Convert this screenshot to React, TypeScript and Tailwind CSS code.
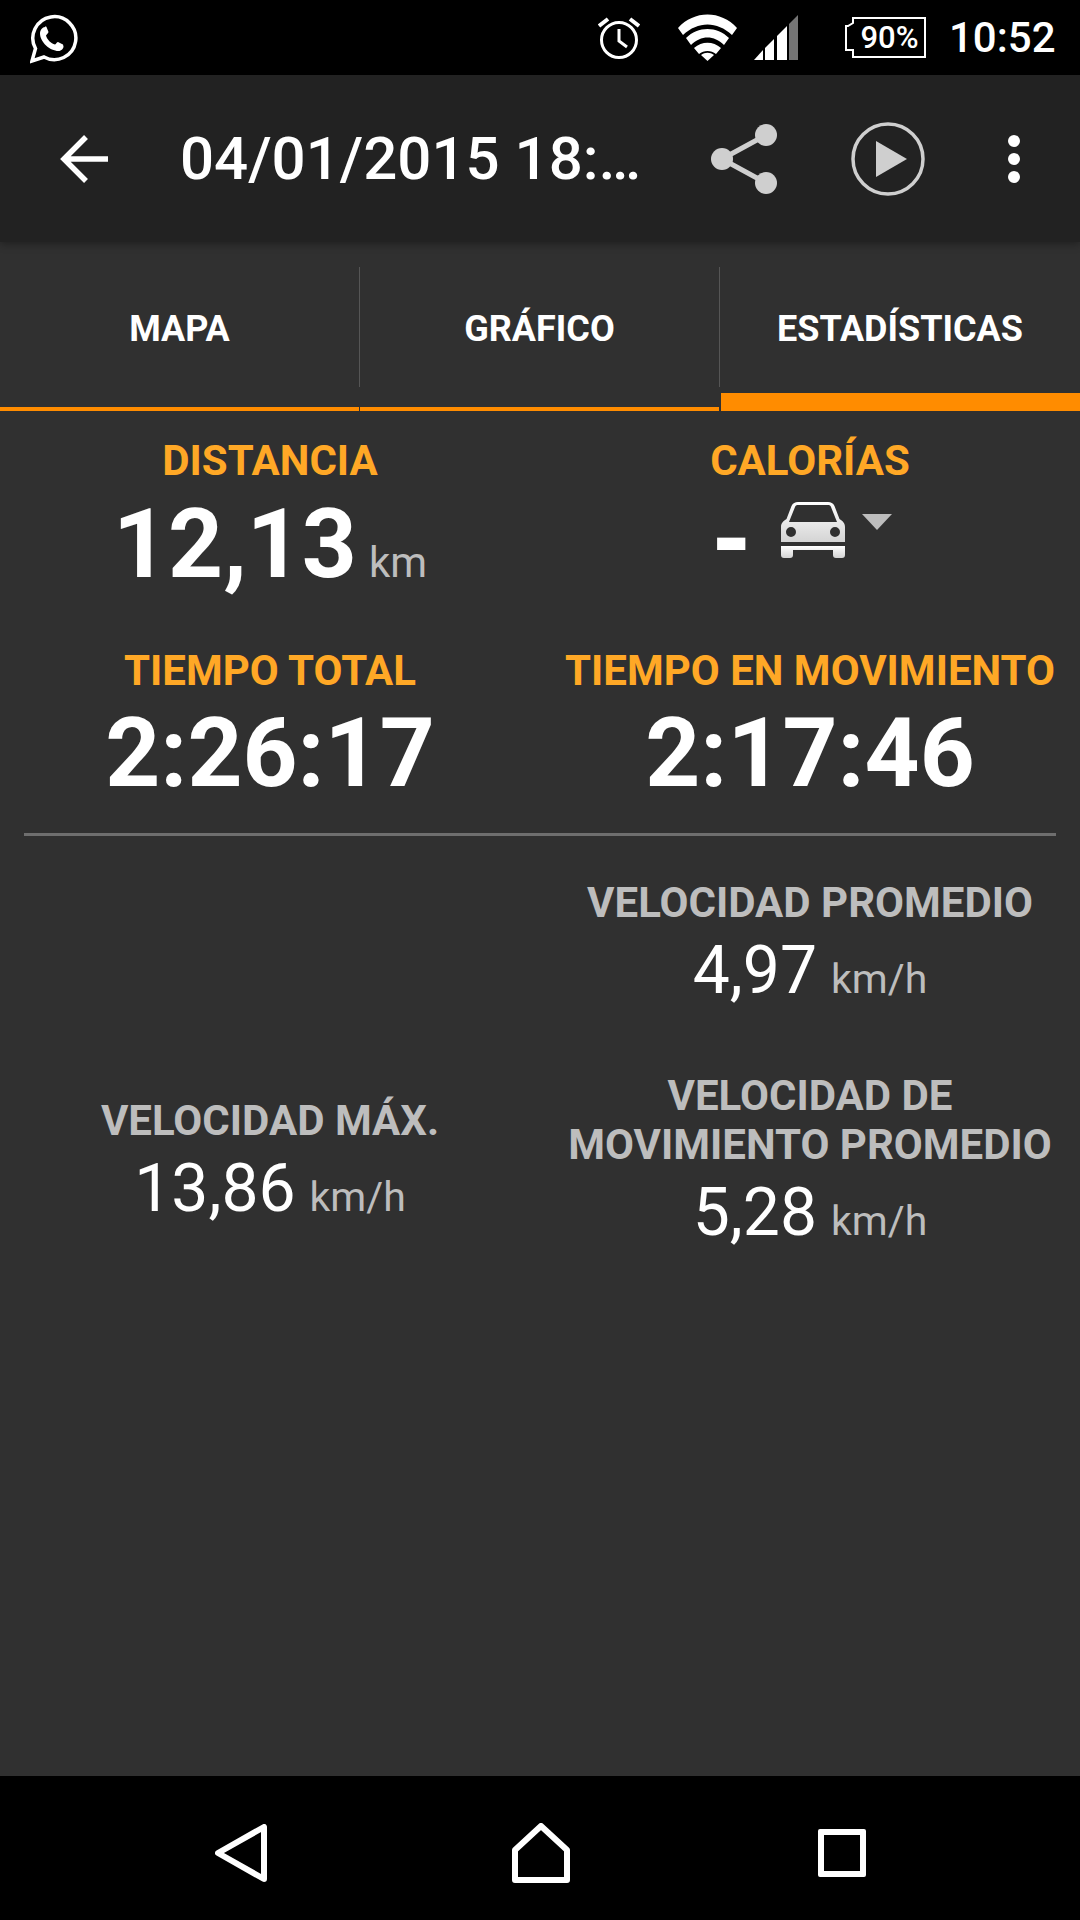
function WhatsappIcon() {
  return (
    <svg width="48" height="50" viewBox="0 0 48 50" className="absolute top-[14px] left-[30px]">
      <path
        d="M2 47l3.500-12.500a21.500 21.500 0 1 1 8.500 8.500z"
        fill="none"
        stroke="white"
        strokeWidth="3.500"
        strokeLinejoin="miter"
      />
      <path
        fill="white"
        d="M15 13c-2.500 0-5 3-5 6.500C10 28 20 37 28.500 37c3 0 5-2.500 5-4.500l-.5-2-5-2.500c-1 0-2 2-3 2.500-4-1-8-5-9-9 .5-1 2.500-2.500 2.500-3.500l-2-5c-.3-.7-1-.5-1.500-.5z"
      />
    </svg>
  );
}

function AlarmIcon() {
  return (
    <svg width="42" height="43" viewBox="0 0 42 43" fill="none" stroke="white" className="ml-[598px] shrink-0">
      <circle cx="21" cy="24" r="17.500" strokeWidth="3" />
      <path d="M21 13v12l8 6" strokeWidth="3" />
      <path d="M1 10l9-7M41 10l-9-7" strokeWidth="4" />
    </svg>
  );
}

function WifiIcon() {
  return (
    <svg width="59" height="47" viewBox="0 0 59 47" fill="white" className="ml-[38px] shrink-0">
      <path d="M0 14C16-4 43-4 59 14l-5 7C39 7 20 7 5 21z" />
      <path d="M8 24C20 12 39 12 51 24l-5 7C36 21 23 21 13 31z" />
      <path d="M16 34c8-7 19-7 27 0l-5 6c-5-4-12-4-17 0z" />
      <path d="M23 41c4-3 9-3 13 0l-6.500 6z" />
    </svg>
  );
}

function SignalIcon() {
  return (
    <svg width="44" height="45" viewBox="0 0 44 45" className="ml-[17px] shrink-0">
      <path d="M0 45l9-10v10z" fill="white" />
      <path d="M11 33l9-9v21h-9z" fill="white" />
      <path d="M23 21l10-10v34H23z" fill="white" />
      <path d="M35 9l9-9v45h-9z" fill="#757575" />
    </svg>
  );
}

function BatteryIcon() {
  return (
    <div className="relative ml-[47px] flex h-[41px] w-[81px] shrink-0 items-center justify-end">
      <svg width="81" height="41" viewBox="0 0 81 41" fill="none" stroke="white" strokeWidth="2" className="absolute top-0 left-0">
        <path d="M8 1h72v39H8v-7H1V9h2l5-3z" />
      </svg>
      <span className="w-[73px] text-center text-[31px] leading-none font-medium text-white">90%</span>
    </div>
  );
}

function ShareIcon() {
  return (
    <svg width="66" height="70" viewBox="0 0 66 70" className="ml-[71px] shrink-0">
      <path d="M11 35L55 11M11 35l44 24" stroke="#cfcfcf" strokeWidth="5" fill="none" />
      <circle cx="55" cy="11" r="11" fill="#cfcfcf" />
      <circle cx="11" cy="35" r="11" fill="#cfcfcf" />
      <circle cx="55" cy="59" r="11" fill="#cfcfcf" />
    </svg>
  );
}

function PlayIcon() {
  return (
    <svg width="74" height="74" viewBox="0 0 74 74" className="ml-[74px] shrink-0">
      <circle cx="37" cy="37" r="35" stroke="#cfcfcf" strokeWidth="3.500" fill="none" />
      <path d="M25 19l31 18-31 18z" fill="#cfcfcf" />
    </svg>
  );
}

function CarIcon() {
  return (
    <svg width="64" height="56" viewBox="0 0 64 56" className="shrink-0">
      <defs>
        <linearGradient id="carFill" x1="0" y1="0" x2="0" y2="1">
          <stop offset="0" stopColor="#ffffff" />
          <stop offset="1" stopColor="#d4d4d4" />
        </linearGradient>
      </defs>
      <path
        fillRule="evenodd"
        fill="url(#carFill)"
        d="M17 0h30c3 0 5 1 6.500 4l5 13c3 2 5.500 4 5.500 8v15H0V25c0-4 2.500-6 5.500-8l5-13C12 1 14 0 17 0zM17 3c-1.500 0-2.500.5-3 2L8 20h48L50 5c-.5-1.500-1.500-2-3-2zM10 25a5 5 0 1 0 0 10 5 5 0 0 0 0-10zm44 0a5 5 0 1 0 0 10 5 5 0 0 0 0-10z"
      />
      <path
        fill="url(#carFill)"
        d="M0 44h64v9c0 2-1 3-3 3H55c-2 0-3-1-3-3v-5H12v5c0 2-1 3-3 3H3c-2 0-3-1-3-3z"
      />
    </svg>
  );
}

function Tab({ label, active, last }: { label: string; active?: boolean; last?: boolean }) {
  return (
    <div className="relative flex h-[169px] flex-1 flex-col">
      <div className={`mt-[25px] flex h-[120px] items-center justify-center pt-[3px] text-[36px] font-bold text-white ${last ? '' : 'border-r border-[#555555]'}`}>
        {label}
      </div>
      <div className={`absolute right-0 bottom-0 bg-[#ff8c00] ${active ? 'left-[1px] h-[18px]' : 'left-0 mr-[1px] h-[4px]'}`} />
    </div>
  );
}

function Label({ children, color = 'text-[#ffa826]' }: { children: React.ReactNode; color?: string }) {
  return <div className={`text-[42px] leading-[49px] font-bold whitespace-nowrap ${color}`}>{children}</div>;
}

function SpeedStat({ label, value, lines }: { label: string; value: string; lines?: string }) {
  return (
    <div className="flex flex-col items-center">
      <Label color="text-[#bdbdbd]">{label}</Label>
      {lines && <Label color="text-[#bdbdbd]">{lines}</Label>}
      <div className="mt-[5px] flex h-[78px] items-baseline whitespace-nowrap text-white">
        <span className="text-[66px] leading-[78px]">{value}</span>
        <span className="ml-[14px] text-[41px] text-[#bdbdbd]">km/h</span>
      </div>
    </div>
  );
}

export default function App() {
  return (
    <div className="flex h-[1920px] w-[1080px] flex-col overflow-hidden bg-[#303030] font-['Roboto',sans-serif]">
      {/* status bar */}
      <div className="relative flex h-[75px] shrink-0 items-center bg-black">
        <WhatsappIcon />
        <AlarmIcon />
        <WifiIcon />
        <SignalIcon />
        <BatteryIcon />
        <span className="ml-[23px] text-[42px] leading-none font-medium text-white">10:52</span>
      </div>

      {/* toolbar */}
      <div className="relative z-10 flex h-[167px] shrink-0 items-center bg-[#222222] shadow-[0_2px_8px_rgba(0,0,0,0.35)]">
        <svg width="48" height="48" viewBox="0 0 48 48" fill="none" stroke="white" strokeWidth="5.500" className="ml-[60px] shrink-0">
          <path d="M3 24h45M26 2L4 24l22 22" />
        </svg>
        <div className="ml-[72px] w-[460px] shrink-0 text-[60px] leading-none font-medium whitespace-nowrap text-white">
          04/01/2015 18:…
        </div>
        <ShareIcon />
        <PlayIcon />
        <div className="ml-[83px] flex flex-col gap-[6px]">
          <div className="h-[12px] w-[12px] rounded-full bg-white" />
          <div className="h-[12px] w-[12px] rounded-full bg-white" />
          <div className="h-[12px] w-[12px] rounded-full bg-white" />
        </div>
      </div>

      {/* tabs */}
      <div className="flex shrink-0">
        <Tab label="MAPA" />
        <Tab label="GRÁFICO" />
        <Tab label="ESTADÍSTICAS" active last />
      </div>

      {/* main stats */}
      <div className="flex flex-1 flex-col">
        <div className="mt-[25px] grid grid-cols-2">
          <div className="flex flex-col items-center">
            <Label>DISTANCIA</Label>
            <div className="mt-[3px] flex h-[112px] items-baseline text-white">
              <span className="text-[96px] leading-[112px] font-bold">12,13</span>
              <span className="ml-[12px] text-[42px] text-[#bdbdbd]">km</span>
            </div>
          </div>
          <div className="flex flex-col items-center">
            <Label>CALORÍAS</Label>
            <div className="mt-[3px] mr-[18px] flex h-[112px] items-start text-white">
              <span className="text-[96px] leading-[104px] font-black">-</span>
              <div className="mt-[14px] ml-[28px]"><CarIcon /></div>
              <div className="mt-[26px] ml-[17px] h-0 w-0 border-x-[15px] border-t-[16px] border-x-transparent border-t-[#bdbdbd]" />
            </div>
          </div>
        </div>
        <div className="mt-[46px] grid grid-cols-2">
          <div className="flex flex-col items-center">
            <Label>TIEMPO TOTAL</Label>
            <div className="mt-[2px] text-[96px] leading-[112px] font-bold text-white">2:26:17</div>
          </div>
          <div className="flex flex-col items-center">
            <Label>TIEMPO EN MOVIMIENTO</Label>
            <div className="mt-[2px] text-[96px] leading-[112px] font-bold text-white">2:17:46</div>
          </div>
        </div>
        <div className="mx-[24px] mt-[24px] h-[3px] bg-[#6e6e6e]" />

        {/* speed stats */}
        <div className="mt-[42px] grid grid-cols-2">
          <div />
          <SpeedStat label="VELOCIDAD PROMEDIO" value="4,97" />
          <div className="mt-[61px] flex items-center justify-center">
            <SpeedStat label="VELOCIDAD MÁX." value="13,86" />
          </div>
          <div className="mt-[61px]">
            <SpeedStat label="VELOCIDAD DE" lines="MOVIMIENTO PROMEDIO" value="5,28" />
          </div>
        </div>
      </div>

      {/* nav bar */}
      <div className="flex h-[144px] shrink-0 items-center bg-black pt-[10px]">
        <svg width="52" height="58" viewBox="0 0 52 58" fill="none" stroke="white" strokeWidth="6" strokeLinejoin="round" className="ml-[215px] shrink-0">
          <path d="M3 29L49 3v52z" />
        </svg>
        <svg width="58" height="60" viewBox="0 0 58 60" fill="none" stroke="white" strokeWidth="6" strokeLinejoin="round" className="ml-[245px] shrink-0">
          <path d="M3 27L29 3l26 24v30H3z" />
        </svg>
        <div className="ml-[248px] h-[48px] w-[48px] rounded-[2px] border-[6px] border-white" />
      </div>
    </div>
  );
}
